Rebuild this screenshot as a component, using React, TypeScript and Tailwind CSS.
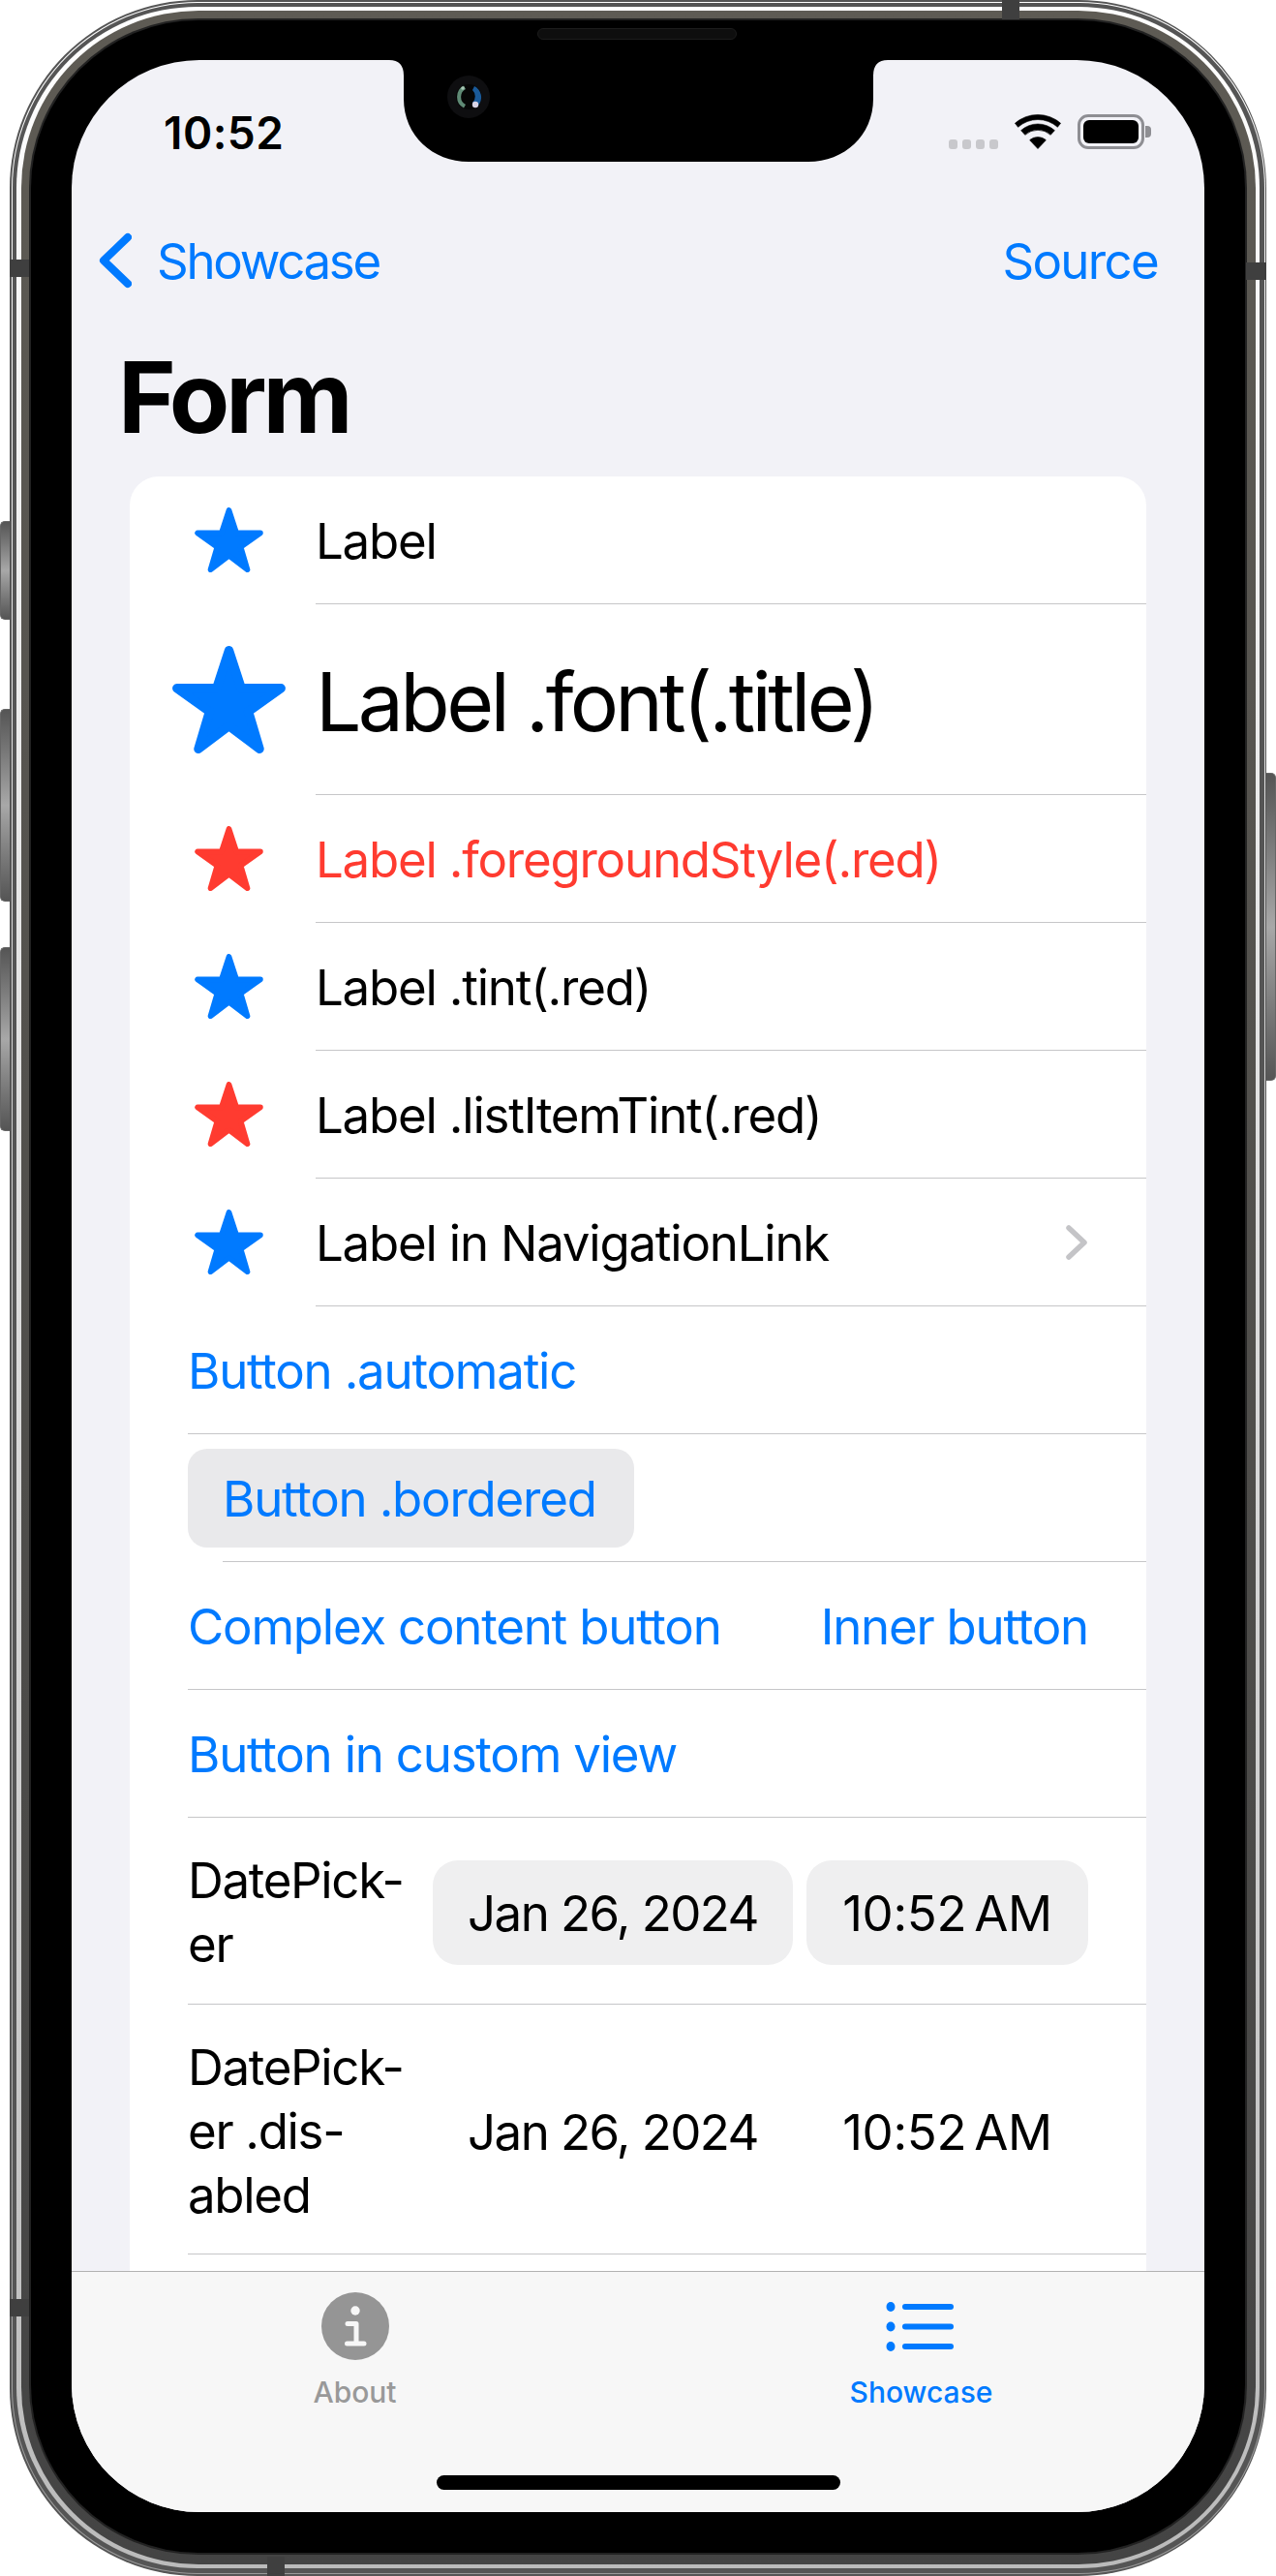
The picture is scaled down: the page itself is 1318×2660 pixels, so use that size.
import React from "react";

const BLUE = "#007aff";
const RED = "#ff3b30";

function Star({ size, color }: { size: "sm" | "lg"; color: string }) {
  return (
    <svg
      viewBox="0 0 100 95"
      className={size === "sm" ? "w-[71px] h-[67px]" : "w-[117px] h-[111px]"}
      fill={color}
      stroke={color}
      strokeWidth={8}
      strokeLinejoin="round"
    >
      <polygon points="50,4 60.9,37.4 96,37.4 67.2,58 77,91 50,70.6 23,91 32.8,58 4,37.4 39.1,37.4" />
    </svg>
  );
}

function Sep({ inset }: { inset: "icon" | "text" | "pill" }) {
  const cls =
    inset === "icon"
      ? "h-px ml-[192px] bg-[#c6c6c8]"
      : inset === "pill"
        ? "h-px ml-[96px] bg-[#c6c6c8]"
        : "h-px ml-[60px] bg-[#c6c6c8]";
  return <div className={cls} />;
}

function LabelRow({
  text,
  starColor = BLUE,
  textColor = "#000",
  big = false,
  chevron = false,
}: {
  text: string;
  starColor?: string;
  textColor?: string;
  big?: boolean;
  chevron?: boolean;
}) {
  return (
    <>
      <div className={big ? "flex items-center h-[196px]" : "flex items-center h-[131px]"}>
        <div className="w-[204px] shrink-0 flex justify-center">
          <Star size={big ? "lg" : "sm"} color={starColor} />
        </div>
        <div
          className={
            big
              ? "-ml-[12px] pt-[6px] text-[84px] tracking-[-0.0435em] flex-1"
              : "-ml-[12px] pt-[4px] text-[51px] tracking-[-0.024em] flex-1"
          }
          style={{ color: textColor }}
        >
          {text}
        </div>
        {chevron && (
          <svg viewBox="0 0 25 36" className="w-[25px] h-[36px] mr-[60px]" fill="none" stroke="#c4c4c7" strokeWidth={5.5} strokeLinecap="round" strokeLinejoin="round">
            <path d="M5 3 L21 18 L5 33" />
          </svg>
        )}
      </div>
      <Sep inset="icon" />
    </>
  );
}

function DateRow({ lines, disabled = false }: { lines: string[]; disabled?: boolean }) {
  const date = disabled
    ? "w-[372px] h-[108px] pt-[3px] flex items-center justify-center rounded-[26px] text-[51px] tracking-[-0.031em]"
    : "w-[372px] h-[108px] pt-[3px] flex items-center justify-center rounded-[26px] text-[51px] tracking-[-0.031em] bg-[#efeff0]";
  const time = disabled
    ? "w-[291px] h-[108px] pt-[3px] flex items-center justify-center rounded-[26px] text-[51px] tracking-[-0.006em]"
    : "w-[291px] h-[108px] pt-[3px] flex items-center justify-center rounded-[26px] text-[51px] tracking-[-0.006em] bg-[#efeff0]";
  return (
    <>
      <div className={disabled ? "flex items-center justify-between pl-[60px] pr-[60px] pt-[4px] h-[257px]" : "flex items-center justify-between pl-[60px] pr-[60px] pt-[4px] h-[192px]"}>
        <div className="text-[51px] leading-[66px] tracking-[-0.026em] whitespace-pre">{lines.join("\n")}</div>
        <div className="flex gap-[14px]">
          <div className={date}>Jan 26, 2024</div>
          <div className={time}>
            <span className="[word-spacing:-0.12em]">10:52 AM</span>
          </div>
        </div>
      </div>
      <Sep inset="text" />
    </>
  );
}

function ButtonRow({ children }: { children: React.ReactNode }) {
  return (
    <>
      <div className="flex items-center justify-between h-[131px] pl-[60px] pr-[60px] pt-[3px] text-[51px] tracking-[-0.024em] text-[#007aff]">
        {children}
      </div>
      <Sep inset="text" />
    </>
  );
}

function StatusBar() {
  return (
    <div className="h-[141px] flex justify-between pt-[56px] pl-[95px] pr-[55px]">
      <div className="text-[46px] font-semibold leading-[38px] text-black tracking-[0.01em]">10:52</div>
      <div className="flex items-start gap-[17px] h-[36px]">
        <div className="flex gap-[5px] mt-[26px]">
          <div className="w-[9px] h-[10px] rounded-[3px] bg-[#c8c8cc]" />
          <div className="w-[9px] h-[10px] rounded-[3px] bg-[#c8c8cc]" />
          <div className="w-[9px] h-[10px] rounded-[3px] bg-[#c8c8cc]" />
          <div className="w-[9px] h-[10px] rounded-[3px] bg-[#c8c8cc]" />
        </div>
        <svg viewBox="0 0 48 36" className="w-[48px] h-[36px] overflow-visible" fill="#000" stroke="#000" strokeWidth={0.6} strokeLinejoin="round">
          <path d="M0.4 9.25 A36 36 0 0 1 47.6 9.25 L44.4 13.33 A30.5 30.5 0 0 0 3.6 13.33 Z" />
          <path d="M6.6 16.68 A26 26 0 0 1 41.4 16.68 L37.18 21.36 A19.7 19.7 0 0 0 10.82 21.36 Z" />
          <path d="M15.64 26.71 A12.5 12.5 0 0 1 32.36 26.71 L24 35.6 Z" />
        </svg>
        <div className="flex items-center">
          <div className="w-[69px] h-[36px] rounded-[11px] border-[3px] border-[#8e8e93] p-[3px]">
            <div className="w-full h-full rounded-[6px] bg-black" />
          </div>
          <div className="w-[6px] h-[12px] ml-px rounded-r-[4px] bg-[#8e8e93]" />
        </div>
      </div>
    </div>
  );
}

function NavBar() {
  return (
    <div className="h-[132px] flex items-center justify-between pl-[28px] pr-[48px] pt-[3px] text-[51px] text-[#007aff]">
      <div className="flex items-center gap-[26px]">
        <svg viewBox="0 0 34 58" className="w-[34px] h-[58px] -mt-[3px]" fill="none" stroke="#007aff" strokeWidth={8} strokeLinecap="round" strokeLinejoin="round">
          <path d="M30 5 L5 29 L30 53" />
        </svg>
        <span className="tracking-[-0.045em]">Showcase</span>
      </div>
      <span className="tracking-[-0.033em]">Source</span>
    </div>
  );
}

function TabBar() {
  return (
    <div className="h-[249px] shrink-0 border-t border-[#b2b2b2] bg-[#f7f7f7] grid grid-cols-2 relative">
      <div className="flex flex-col items-center pt-[21px]">
        <svg viewBox="0 0 70 70" className="w-[70px] h-[70px]">
          <circle cx="35" cy="35" r="35" fill="#959595" />
          <circle cx="35" cy="19" r="4.7" fill="#f7f7f7" />
          <path d="M27 32.5 H36 V53 M26.5 53 H44" fill="none" stroke="#f7f7f7" strokeWidth={5} strokeLinecap="round" strokeLinejoin="round" />
        </svg>
        <span className="mt-[13px] text-[30px] leading-[40px] font-medium text-[#999999]">About</span>
      </div>
      <div className="flex flex-col items-center pt-[21px]">
        <svg viewBox="0 0 70 70" className="w-[70px] h-[70px] -translate-x-[2px]" fill="#007aff">
          <ellipse cx="5" cy="15" rx="4.5" ry="5" />
          <ellipse cx="5" cy="35.5" rx="4.5" ry="5" />
          <ellipse cx="5" cy="56" rx="4.5" ry="5" />
          <rect x="17" y="12" width="53" height="6" rx="3" />
          <rect x="17" y="32.5" width="53" height="6" rx="3" />
          <rect x="17" y="53" width="53" height="6" rx="3" />
        </svg>
        <span className="mt-[13px] text-[30px] leading-[40px] font-medium text-[#007aff]">Showcase</span>
      </div>
      <div className="absolute left-[377px] top-[210px] w-[417px] h-[15px] rounded-full bg-black" />
    </div>
  );
}

function Screen() {
  return (
    <div className="relative w-[1170px] h-[2532px] rounded-[132px] overflow-hidden bg-[#f2f2f7] flex flex-col text-black">
      <svg viewBox="0 0 1170 106" className="absolute left-0 top-0 w-[1170px] h-[106px]">
        <path d="M328 0 Q343 0 343 16 L343 40 C343 78 373 105 410 105 L761 105 C798 105 828 78 828 40 L828 16 Q828 0 843 0 Z" fill="#000" />
        <circle cx="410" cy="38" r="22" fill="#0e0e10" />
        <circle cx="410" cy="38" r="13" fill="#060606" />
        <path d="M405 26.5 A13 13 0 0 0 405 49.5 L407 46 A9 9 0 0 1 407 30 Z" fill="#5f8a75" />
        <path d="M416 27 A13 13 0 0 1 420 47 L414 44 A9 9 0 0 0 414 31 Z" fill="#1a5a99" />
        <circle cx="417" cy="46" r="3.2" fill="#d8d4e6" />
        <circle cx="404" cy="29" r="1.8" fill="#a9c8b6" />
      </svg>
      <StatusBar />
      <NavBar />
      <div className="h-[157px] shrink-0 pl-[48px] pt-[19px] text-[102px] leading-[112px] font-bold tracking-[-0.04em]">Form</div>
      <div className="flex-1 min-h-0 px-[60px] overflow-hidden">
        <div className="bg-white rounded-t-[30px] h-full">
          <LabelRow text="Label" />
          <LabelRow text="Label .font(.title)" big />
          <LabelRow text="Label .foregroundStyle(.red)" starColor={RED} textColor={RED} />
          <LabelRow text="Label .tint(.red)" />
          <LabelRow text="Label .listItemTint(.red)" starColor={RED} />
          <LabelRow text="Label in NavigationLink" chevron />
          <ButtonRow>
            <span>Button .automatic</span>
          </ButtonRow>
          <div className="h-[131px] flex items-center pl-[60px] text-[51px] tracking-[-0.024em] text-[#007aff]">
            <div className="w-[461px] h-[102px] pt-[3px] rounded-[20px] bg-[#e9e9eb] flex items-center pl-[36px]">Button .bordered</div>
          </div>
          <Sep inset="pill" />
          <ButtonRow>
            <span>Complex content button</span>
            <span>Inner button</span>
          </ButtonRow>
          <ButtonRow>
            <span>Button in custom view</span>
          </ButtonRow>
          <DateRow lines={["DatePick-", "er"]} />
          <DateRow lines={["DatePick-", "er .dis-", "abled"]} disabled />
        </div>
      </div>
      <TabBar />
    </div>
  );
}

function Phone() {
  return (
    <div className="relative w-[1298px] h-[2660px] rounded-[194px] bg-[#555555] pt-[2px] pb-[2px] px-[1.5px]">
      <div className="h-full rounded-[192px] bg-linear-to-b from-white to-[#999999] pt-px pb-px px-px">
        <div className="h-full rounded-[191px] bg-[#555555] pt-[4px] pb-[5px] px-[4.5px]">
          <div className="h-full rounded-[187px] bg-linear-to-b from-white to-[#bbbbbb] pt-[4px] pb-[4px] px-[4.5px]">
            <div className="h-full rounded-[183px] bg-linear-to-b from-[#5e5b54] to-[#444444] pt-[8px] pb-[10px] px-[8.5px]">
              <div className="h-full rounded-[175px] bg-[#222222] pt-[2px] pb-[2px] px-[2px]">
                <div className="relative h-full rounded-[173px] bg-black pt-[41px] pb-[42px] px-[42px]">
                  <div className="absolute left-[523px] top-[8px] w-[206px] h-[12px] rounded-full bg-[#0e0e0e] border border-[#1c1c1c]" />
                  <Screen />
                </div>
              </div>
            </div>
          </div>
        </div>
      </div>
    </div>
  );
}

export default function App() {
  return (
    <div className="relative w-[1318px] h-[2660px] bg-white pl-[10px] overflow-hidden font-['Inter','Liberation_Sans',sans-serif]">
      <Phone />
      <div className="absolute left-0 top-[538px] w-[10px] h-[102px] rounded-l-[5px] border-l border-t border-b border-[#666666] bg-linear-to-b from-[#555555] via-[#a8a8a8] to-[#555555]" />
      <div className="absolute left-0 top-[732px] w-[10px] h-[199px] rounded-l-[5px] border-l border-t border-b border-[#666666] bg-linear-to-b from-[#555555] via-[#a8a8a8] to-[#555555]" />
      <div className="absolute left-0 top-[978px] w-[10px] h-[190px] rounded-l-[5px] border-l border-t border-b border-[#666666] bg-linear-to-b from-[#555555] via-[#a8a8a8] to-[#555555]" />
      <div className="absolute right-0 top-[798px] w-[10px] h-[318px] rounded-r-[5px] border-r border-t border-b border-[#666666] bg-linear-to-b from-[#555555] via-[#a8a8a8] to-[#555555]" />
      <div className="absolute left-[10px] top-[268px] w-[20px] h-[18px] bg-[#3f3f3f]" />
      <div className="absolute left-[10px] top-[2374px] w-[20px] h-[18px] bg-[#3f3f3f]" />
      <div className="absolute right-[10px] top-[271px] w-[21px] h-[18px] bg-[#3f3f3f]" />
      <div className="absolute left-[1035px] top-0 w-[18px] h-[20px] bg-[#3f3f3f]" />
      <div className="absolute left-[276px] top-[2640px] w-[18px] h-[20px] bg-[#3f3f3f]" />
    </div>
  );
}
